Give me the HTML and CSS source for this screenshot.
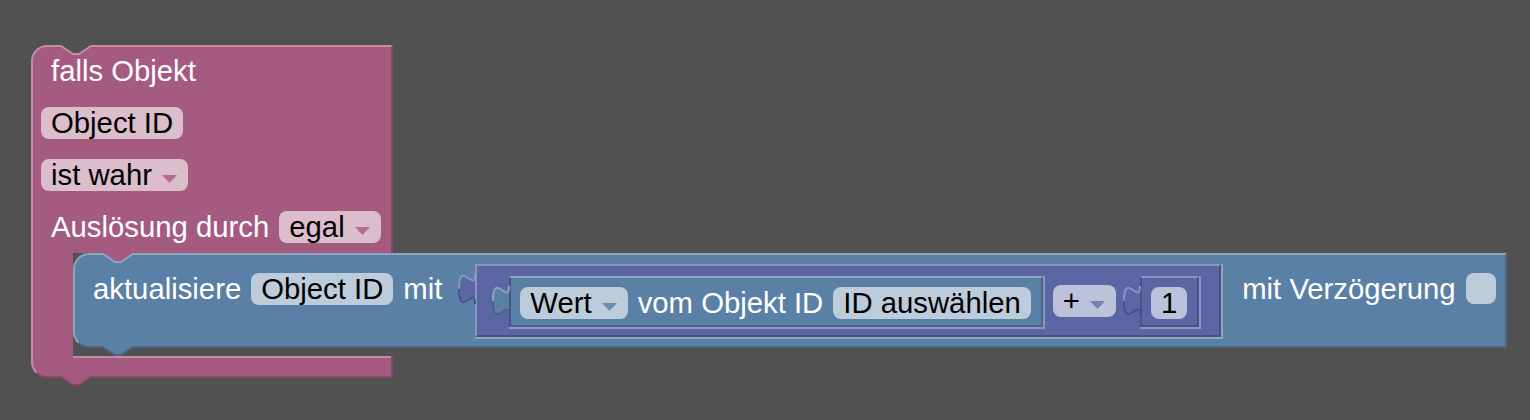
FILE: index.html
```html
<!DOCTYPE html>
<html lang="de">
  <head>
    <meta charset="UTF-8" />
    <title>Blockly</title>
    <link rel="stylesheet" href="styles.css">
  </head>
  <body>
    <div class="workspace">
      <div class="c-block">
        <div class="c-top">
          <svg class="notch-cut" width="30" height="10"><polygon class="cut" points="0,0 12,8 18,8 30,0"/><polyline class="hl-pink" points="0,1 12,9 18,9 30,1"/></svg>
          <div class="row"><span class="label">falls Objekt</span></div>
          <div class="row"><span class="field f-pink">Object ID</span></div>
          <div class="row">
            <span class="field f-pink dropdown">ist wahr <svg width="15" height="8"><polygon class="arrow-pink" points="0,0 15,0 7.5,8"/></svg></span>
          </div>
          <div class="row">
            <span class="label">Auslösung durch</span>
            <span class="field f-pink dropdown">egal <svg width="15" height="8"><polygon class="arrow-pink" points="0,0 15,0 7.5,8"/></svg></span>
          </div>
        </div>

        <div class="c-mouth">
          <div class="c-arm"></div>
          <div class="stmt blue">
            <svg class="notch-cut" width="30" height="10"><polygon class="pink-fill" points="0,0 12,8 18,8 30,0"/><polyline class="hl-blue" points="0,1 12,9 18,9 30,1"/></svg>
            <span class="label">aktualisiere</span>
            <span class="field f-blue">Object ID</span>
            <span class="label">mit</span>

            <div class="slot slot-blue">
              <div class="value purple">
                <svg class="tab" width="16" height="30"><path class="purple-fill" d="M16,0 C16,20 0,-16 0,15 C0,46 16,10 16,30 Z"/><path class="tab-dark dark-purple-line" d="M0,15 C0,46 16,10 16,30"/><path class="tab-hl hl-purple" d="M16,0 C16,20 0,-16 0,15"/></svg>

                <div class="slot slot-purple">
                  <div class="value blue inner">
                    <svg class="tab" width="16" height="30"><path class="blue-fill" d="M16,0 C16,20 0,-16 0,15 C0,46 16,10 16,30 Z"/><path class="tab-dark dark-blue-line" d="M0,15 C0,46 16,10 16,30"/><path class="tab-hl hl-blue" d="M16,0 C16,20 0,-16 0,15"/></svg>
                    <span class="field f-blue dropdown">Wert <svg width="15" height="8"><polygon class="arrow-blue" points="0,0 15,0 7.5,8"/></svg></span>
                    <span class="label">vom Objekt ID</span>
                    <span class="field f-blue">ID auswählen</span>
                  </div>
                </div>

                <span class="field f-purple dropdown op">+ <svg width="15" height="8"><polygon class="arrow-purple" points="0,0 15,0 7.5,8"/></svg></span>

                <div class="slot slot-purple">
                  <div class="value purple inner">
                    <svg class="tab" width="16" height="30"><path class="purple-fill" d="M16,0 C16,20 0,-16 0,15 C0,46 16,10 16,30 Z"/><path class="tab-dark dark-purple-line" d="M0,15 C0,46 16,10 16,30"/><path class="tab-hl hl-purple" d="M16,0 C16,20 0,-16 0,15"/></svg>
                    <span class="field f-purple">1</span>
                  </div>
                </div>
              </div>
            </div>

            <span class="label">mit Verzögerung</span>
            <span class="checkbox"></span>

            <svg class="notch-tab" width="30" height="10"><polygon class="dark-blue" points="0,2 12,10 18,10 30,2"/><polygon class="blue-fill" points="0,0 12,8 18,8 30,0"/></svg>
          </div>
        </div>

        <div class="c-bottom">
          <svg class="notch-tab" width="30" height="10"><polygon class="dark-pink" points="0,2 12,10 18,10 30,2"/><polygon class="pink-fill" points="0,0 12,8 18,8 30,0"/></svg>
        </div>
      </div>
    </div>
  </body>
</html>
```

FILE: styles.css
```css
*{
    margin: 0;
    padding: 0;
    box-sizing: border-box;
}
body{
    background-color: #515151;
    font-family: "Liberation Sans", Arial, sans-serif;
    font-size: 29.3px;
}
.workspace{
    position: relative;
    width: 1530px;
    height: 420px;
    overflow: hidden;
}
svg{
    display: block;
    overflow: visible;
}

/* pink "falls Objekt" block */
.c-block{
    position: absolute;
    left: 31px;
    top: 45px;
    display: flex;
    flex-direction: column;
    align-items: flex-start;
}
.c-top{
    position: relative;
    width: 362px;
    display: flex;
    flex-direction: column;
    gap: 20px;
    padding: 8px 0 10px 8px;
    background-color: #a55b80;
    border-top: 2px solid #c08ca6;
    border-left: 2px solid #c08ca6;
    border-right: 2px solid #844966;
    border-top-left-radius: 16px;
}
.c-top .row > .label{
    margin-left: 10px;
}
.row{
    display: flex;
    align-items: center;
    gap: 10px;
    height: 32px;
}
.c-mouth{
    display: flex;
    height: 103px;
}
.c-arm{
    width: 42px;
    background-color: #a55b80;
    border-left: 2px solid #c08ca6;
}
.c-bottom{
    position: relative;
    width: 362px;
    height: 22px;
    background-color: #a55b80;
    border-left: 2px solid #c08ca6;
    border-right: 2px solid #844966;
    border-bottom: 2px solid #844966;
    border-bottom-left-radius: 16px;
}
.c-bottom::before{
    content: "";
    position: absolute;
    left: 40px;
    right: 0;
    top: 0;
    height: 2px;
    background-color: #c08ca6;
}

/* notches */
.notch-cut{
    position: absolute;
    left: 28px;
    top: -2px;
}
.notch-tab{
    position: absolute;
    left: 28px;
    top: 100%;
}
.c-bottom .notch-tab{
    top: 20px;
}
.cut{ fill: #515151; }
.hl-pink{ fill: none; stroke: #c08ca6; stroke-width: 2; }
.hl-blue{ fill: none; stroke: #8ca6c0; stroke-width: 2; }
.hl-purple{ fill: none; stroke: #8c95c0; stroke-width: 2; }
.dark-blue-line{ fill: none; stroke: #496684; stroke-width: 2; }
.dark-purple-line{ fill: none; stroke: #495284; stroke-width: 2; }
.pink-fill{ fill: #a55b80; }
.blue-fill{ fill: #5b80a5; }
.purple-fill{ fill: #5b67a5; }
.dark-pink{ fill: #844966; }
.dark-blue{ fill: #496684; }

/* statement block */
.stmt{
    position: relative;
    align-self: flex-start;
    display: flex;
    align-items: flex-start;
    gap: 10px;
    padding: 9px 9px 7px 18px;
    border-top: 2px solid #8ca6c0;
    border-left: 2px solid #8ca6c0;
    border-right: 2px solid #496684;
    border-bottom: 2px solid #496684;
    border-radius: 16px 0 0 16px;
}
.blue{ background-color: #5b80a5; }
.purple{ background-color: #5b67a5; }
.stmt > .label,
.stmt > .field,
.stmt > .checkbox{
    margin-top: 9px;
}

/* value blocks */
.slot{
    flex: none;
    margin-left: 16px;
}
.slot-blue{
    margin: 0 9px 0 23px;
    border-right: 2px solid #8ca6c0;
    border-bottom: 2px solid #8ca6c0;
}
.slot-purple{
    border-right: 2px solid #8c95c0;
    border-bottom: 2px solid #8c95c0;
}
.value{
    position: relative;
    display: flex;
    align-items: flex-start;
    gap: 8px;
    padding: 10px 18px 6px 16px;
}
.value.purple{
    border-top: 2px solid #8c95c0;
    border-left: 2px solid #8c95c0;
    border-right: 2px solid #495284;
    border-bottom: 2px solid #495284;
}
.value.inner{
    gap: 10px;
    padding: 9px 10px 6px 9px;
}
.value.blue{
    border-top: 2px solid #8ca6c0;
    border-left: 2px solid #495284;
    border-right: 2px solid #496684;
    border-bottom: 2px solid #496684;
}
.value.purple.inner{
    border-left-color: #495284;
}
.tab{
    position: absolute;
    left: -18px;
    top: 8px;
}
.op{
    margin-top: 9px;
}

/* fields */
.label{
    color: #fff;
    height: 32px;
    line-height: 32px;
    white-space: nowrap;
}
.field{
    display: flex;
    align-items: center;
    height: 32px;
    line-height: 32px;
    padding: 0 10px;
    border-radius: 8px;
    color: #000;
    white-space: nowrap;
}
.field.dropdown{
    gap: 10px;
    padding-right: 11px;
}
.field.dropdown svg{
    margin-top: 8px;
}
.f-pink{ background-color: #dbbdcc; }
.f-blue{ background-color: #bdccdb; }
.f-purple{ background-color: #bdc2db; }
.arrow-pink{ fill: #b66c90; }
.arrow-blue{ fill: #6a8cb0; }
.arrow-purple{ fill: #7480b8; }
.checkbox{
    display: block;
    width: 30px;
    height: 31px;
    border-radius: 8px;
    background-color: #bdccdb;
}
```
